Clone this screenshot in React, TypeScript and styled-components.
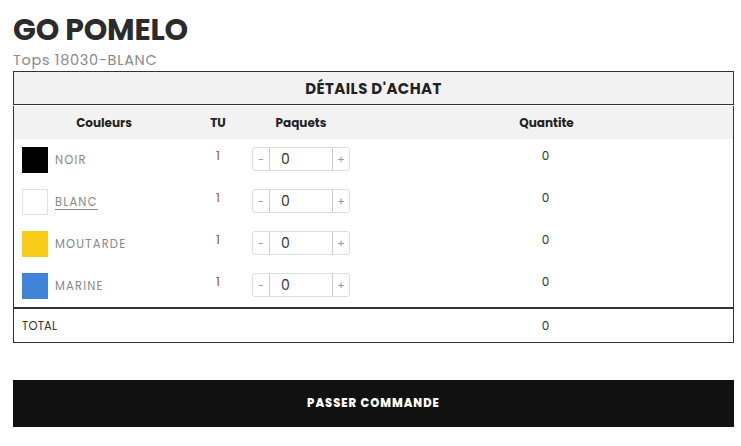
import React from 'react'
import styled, { createGlobalStyle } from 'styled-components'

const GlobalStyle = createGlobalStyle`
  html, body {
    margin: 0;
    padding: 0;
    background: #fff;
  }
  body {
    font-family: Poppins, "Open Sans", "DejaVu Sans", sans-serif;
    color: #333;
  }
`

const Page = styled.div`
  width: 721px;
  padding: 11px 0 0 13px;
`

const Brand = styled.h1`
  margin: 0;
  font-size: 30px;
  line-height: 38px;
  font-weight: 700;
  color: #2b2b2b;
  letter-spacing: -0.2px;
`

const Reference = styled.div`
  font-size: 14.5px;
  line-height: 22px;
  color: #8a8a8a;
  letter-spacing: 0.7px;
`

const SectionTitle = styled.div`
  height: 32px;
  border: 1px solid #333;
  background: #f2f2f2;
  display: flex;
  align-items: center;
  justify-content: center;
  font-size: 15px;
  font-weight: 700;
  letter-spacing: 0.4px;
  color: #222;
`

const Table = styled.div`
  margin-top: 1px;
  border: 1px solid #333;
  border-top: none;
  border-bottom: none;
`

const Grid = styled.div`
  display: grid;
  grid-template-columns: 180px 48px 118px 1fr;
`

const HeadRow = styled(Grid)`
  height: 33px;
  background: #f2f2f2;
  align-items: center;
  font-size: 12px;
  font-weight: 700;
  color: #222;
  text-align: center;
`

const Row = styled(Grid)`
  height: 42px;
  padding-top: 8px;
  box-sizing: border-box;
  align-items: start;
`

const ColorCell = styled.div`
  display: flex;
  align-items: center;
  gap: 7px;
  padding-left: 8px;
`

const Swatch = styled.span<{ $c: string }>`
  width: 26px;
  height: 26px;
  box-sizing: border-box;
  background: ${p => p.$c};
  border: 1px solid ${p => (p.$c === '#ffffff' ? '#e2e2e2' : p.$c)};
`

const ColorName = styled.span<{ $active?: boolean }>`
  font-size: 11.5px;
  letter-spacing: 1.2px;
  color: #888;
  text-decoration: ${p => (p.$active ? 'underline' : 'none')};
  text-underline-offset: 3px;
`

const Unit = styled.div`
  text-align: center;
  font-size: 12px;
  line-height: 18px;
  color: #a0463a;
`

const Stepper = styled.div`
  margin-left: 10px;
  width: 98px;
  height: 24px;
  display: flex;
  border: 1px solid #ddd;
  border-radius: 3px;
  box-sizing: border-box;
`

const StepBtn = styled.span`
  width: 16px;
  display: flex;
  align-items: center;
  justify-content: center;
  font-size: 11px;
  color: #999;
`

const StepInput = styled.span`
  flex: 1;
  border-left: 1px solid #ccc;
  border-right: 1px solid #ccc;
  font-size: 14px;
  line-height: 22px;
  padding-left: 11px;
  color: #333;
`

const Qty = styled.div`
  text-align: center;
  font-size: 12px;
  line-height: 18px;
  color: #333;
  padding-right: 2px;
`

const TotalRow = styled(Grid)`
  height: 33px;
  border: 1px solid #333;
  border-top: 2px solid #333;
  align-items: center;
  font-size: 11.5px;
  color: #333;
`

const TotalLabel = styled.div`
  padding-left: 8px;
  padding-top: 1px;
  letter-spacing: 0.2px;
`

const OrderButton = styled.button`
  display: block;
  margin-top: 37px;
  width: 100%;
  height: 47px;
  border: none;
  background: #111;
  color: #fff;
  font-family: inherit;
  font-size: 11.5px;
  font-weight: 800;
  letter-spacing: 1px;
  cursor: pointer;
`

const colours = [
  { name: 'NOIR', hex: '#000000' },
  { name: 'BLANC', hex: '#ffffff', active: true },
  { name: 'MOUTARDE', hex: '#f8cc17' },
  { name: 'MARINE', hex: '#3f84d8' },
]

export default function App() {
  return (
    <>
      <GlobalStyle />
      <Page>
        <Brand>GO POMELO</Brand>
        <Reference>Tops 18030-BLANC</Reference>
        <SectionTitle>DÉTAILS D'ACHAT</SectionTitle>
        <Table>
          <HeadRow>
            <div>Couleurs</div>
            <div>TU</div>
            <div>Paquets</div>
            <div>Quantite</div>
          </HeadRow>
          {colours.map(c => (
            <Row key={c.name}>
              <ColorCell>
                <Swatch $c={c.hex} />
                <ColorName $active={c.active}>{c.name}</ColorName>
              </ColorCell>
              <Unit>1</Unit>
              <Stepper>
                <StepBtn>-</StepBtn>
                <StepInput>0</StepInput>
                <StepBtn>+</StepBtn>
              </Stepper>
              <Qty>0</Qty>
            </Row>
          ))}
        </Table>
        <TotalRow>
          <TotalLabel>TOTAL</TotalLabel>
          <div />
          <div />
          <Qty>0</Qty>
        </TotalRow>
        <OrderButton>PASSER COMMANDE</OrderButton>
      </Page>
    </>
  )
}
